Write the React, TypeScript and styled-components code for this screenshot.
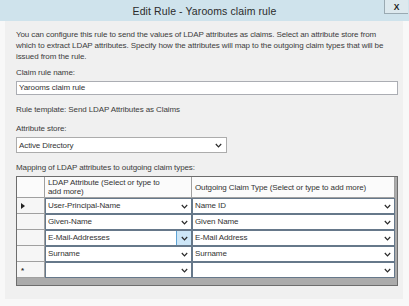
import React from "react";
import styled, { createGlobalStyle } from "styled-components";

const Global = createGlobalStyle`
  html, body { margin: 0; padding: 0; }
  body {
    width: 409px; height: 306px; overflow: hidden; background: #f8f8f8;
    font-family: "Liberation Sans", Arial, sans-serif;
  }
`;

const Window = styled.div`
  width: 409px; height: 306px; display: flex; flex-direction: column; background: #f8f8f8;
`;

const TitleBar = styled.div`
  height: 21px; flex: none; background: #cfe3ec;
  display: grid; grid-template-columns: 1fr auto 1fr; align-items: center;
`;

const Title = styled.div`
  grid-column: 2; font-size: 10.5px; color: #2b2b2b; letter-spacing: 0.1px;
`;

const CloseButton = styled.div`
  grid-column: 3; justify-self: end; align-self: start;
  width: 24px; height: 14px; margin-right: 1px; box-sizing: border-box;
  border-left: 1px solid #9aaab2; border-bottom: 1px solid #9aaab2;
  background: #dde9ee; display: flex; align-items: center; justify-content: center;
  font-size: 8.5px; font-weight: bold; color: #222;
`;

const Body = styled.div`
  flex: 1; margin: 0 6px 7px 5px; background: #f0f0f0;
  padding: 8px 6px 0 11px; display: flex; flex-direction: column;
  font-size: 8px; color: #3c3c3c; line-height: 11px; letter-spacing: -0.1px;
`;

const Text = styled.div<{ $gap?: number }>`
  margin-top: ${(p) => p.$gap ?? 0}px; white-space: nowrap;
`;

const TextInput = styled.div`
  margin-top: 3px; height: 14px; box-sizing: border-box; width: 382px;
  border: 1px solid #abadb3; background: #fff; padding-left: 2px;
  line-height: 12px; color: #333;
`;

const Select = styled.div`
  margin-top: 3px; height: 16px; width: 211px; box-sizing: border-box;
  border: 1px solid #acacac; background: #fff; padding: 0 4px 0 2px;
  display: flex; align-items: center; justify-content: space-between; color: #333;
`;

const Grid = styled.div`
  margin-top: 3px; width: 382px; box-sizing: border-box;
  border: 1px solid #6d6d6d; background: #ababab; padding: 0 2px 7px 0;
  display: grid; grid-template-columns: 28px 147px 1fr;
  color: #333;
`;

const HeaderCell = styled.div`
  height: 21px; box-sizing: border-box; background: #fbfbfb;
  border-right: 1px solid #a0a0a0; border-bottom: 1px solid #a0a0a0;
  padding: 0 3px; display: flex; align-items: center;
  line-height: 9px; white-space: nowrap;
`;

const RowHead = styled.div`
  height: 16px; box-sizing: border-box; background: #f6f6f6;
  border-right: 1px solid #a0a0a0; border-bottom: 1px solid #a0a0a0;
  display: flex; align-items: center; padding-left: 4px;
`;

const Cell = styled.div`
  height: 16px; box-sizing: border-box; background: #fff;
  border: 1px solid #66788a;
  display: flex; align-items: center; justify-content: space-between;
  padding-left: 2px; line-height: 14px;
`;

const Drop = styled.div<{ $hot?: boolean }>`
  width: 15px; height: 14px; box-sizing: border-box; align-self: stretch;
  display: flex; align-items: center; justify-content: center;
  background: ${(p) => (p.$hot ? "#cde6f7" : "transparent")};
  border-left: 1px solid ${(p) => (p.$hot ? "#5ea4d6" : "transparent")};
`;

const Star = styled.span`
  font-size: 8px; font-weight: bold; line-height: 8px; margin-top: 3px; color: #333;
`;

const Chevron = () => (
  <svg width="7" height="5" viewBox="0 0 7 5">
    <path d="M0.8 1 L3.5 3.8 L6.2 1" fill="none" stroke="#2a2a2a" strokeWidth="1.2" />
  </svg>
);

const Arrow = () => (
  <svg width="4" height="6" viewBox="0 0 4 6">
    <path d="M0 0 L4 3 L0 6 Z" fill="#222" />
  </svg>
);

const rows = [
  { a: "User-Principal-Name", b: "Name ID", head: "arrow" },
  { a: "Given-Name", b: "Given Name", head: "" },
  { a: "E-Mail-Addresses", b: "E-Mail Address", head: "", hot: true },
  { a: "Surname", b: "Surname", head: "" },
  { a: "", b: "", head: "star" },
];

export default function App() {
  return (
    <>
      <Global />
      <Window>
        <TitleBar>
          <Title>Edit Rule - Yarooms claim rule</Title>
          <CloseButton>X</CloseButton>
        </TitleBar>
        <Body>
          <Text>
            You can configure this rule to send the values of LDAP attributes as claims. Select an attribute store from
            <br />
            which to extract LDAP attributes. Specify how the attributes will map to the outgoing claim types that will be
            <br />
            issued from the rule.
          </Text>
          <Text $gap={5}>Claim rule name:</Text>
          <TextInput>Yarooms claim rule</TextInput>
          <Text $gap={9}>Rule template: Send LDAP Attributes as Claims</Text>
          <Text $gap={8}>Attribute store:</Text>
          <Select>
            <span>Active Directory</span>
            <Chevron />
          </Select>
          <Text $gap={9}>Mapping of LDAP attributes to outgoing claim types:</Text>
          <Grid>
            <HeaderCell />
            <HeaderCell>
              <span>
                LDAP Attribute (Select or type to
                <br />
                add more)
              </span>
            </HeaderCell>
            <HeaderCell>Outgoing Claim Type (Select or type to add more)</HeaderCell>
            {rows.map((r, i) => (
              <React.Fragment key={i}>
                <RowHead>
                  {r.head === "arrow" && <Arrow />}
                  {r.head === "star" && <Star>*</Star>}
                </RowHead>
                <Cell>
                  <span>{r.a}</span>
                  <Drop $hot={r.hot}>
                    <Chevron />
                  </Drop>
                </Cell>
                <Cell>
                  <span>{r.b}</span>
                  <Drop>
                    <Chevron />
                  </Drop>
                </Cell>
              </React.Fragment>
            ))}
          </Grid>
        </Body>
      </Window>
    </>
  );
}
